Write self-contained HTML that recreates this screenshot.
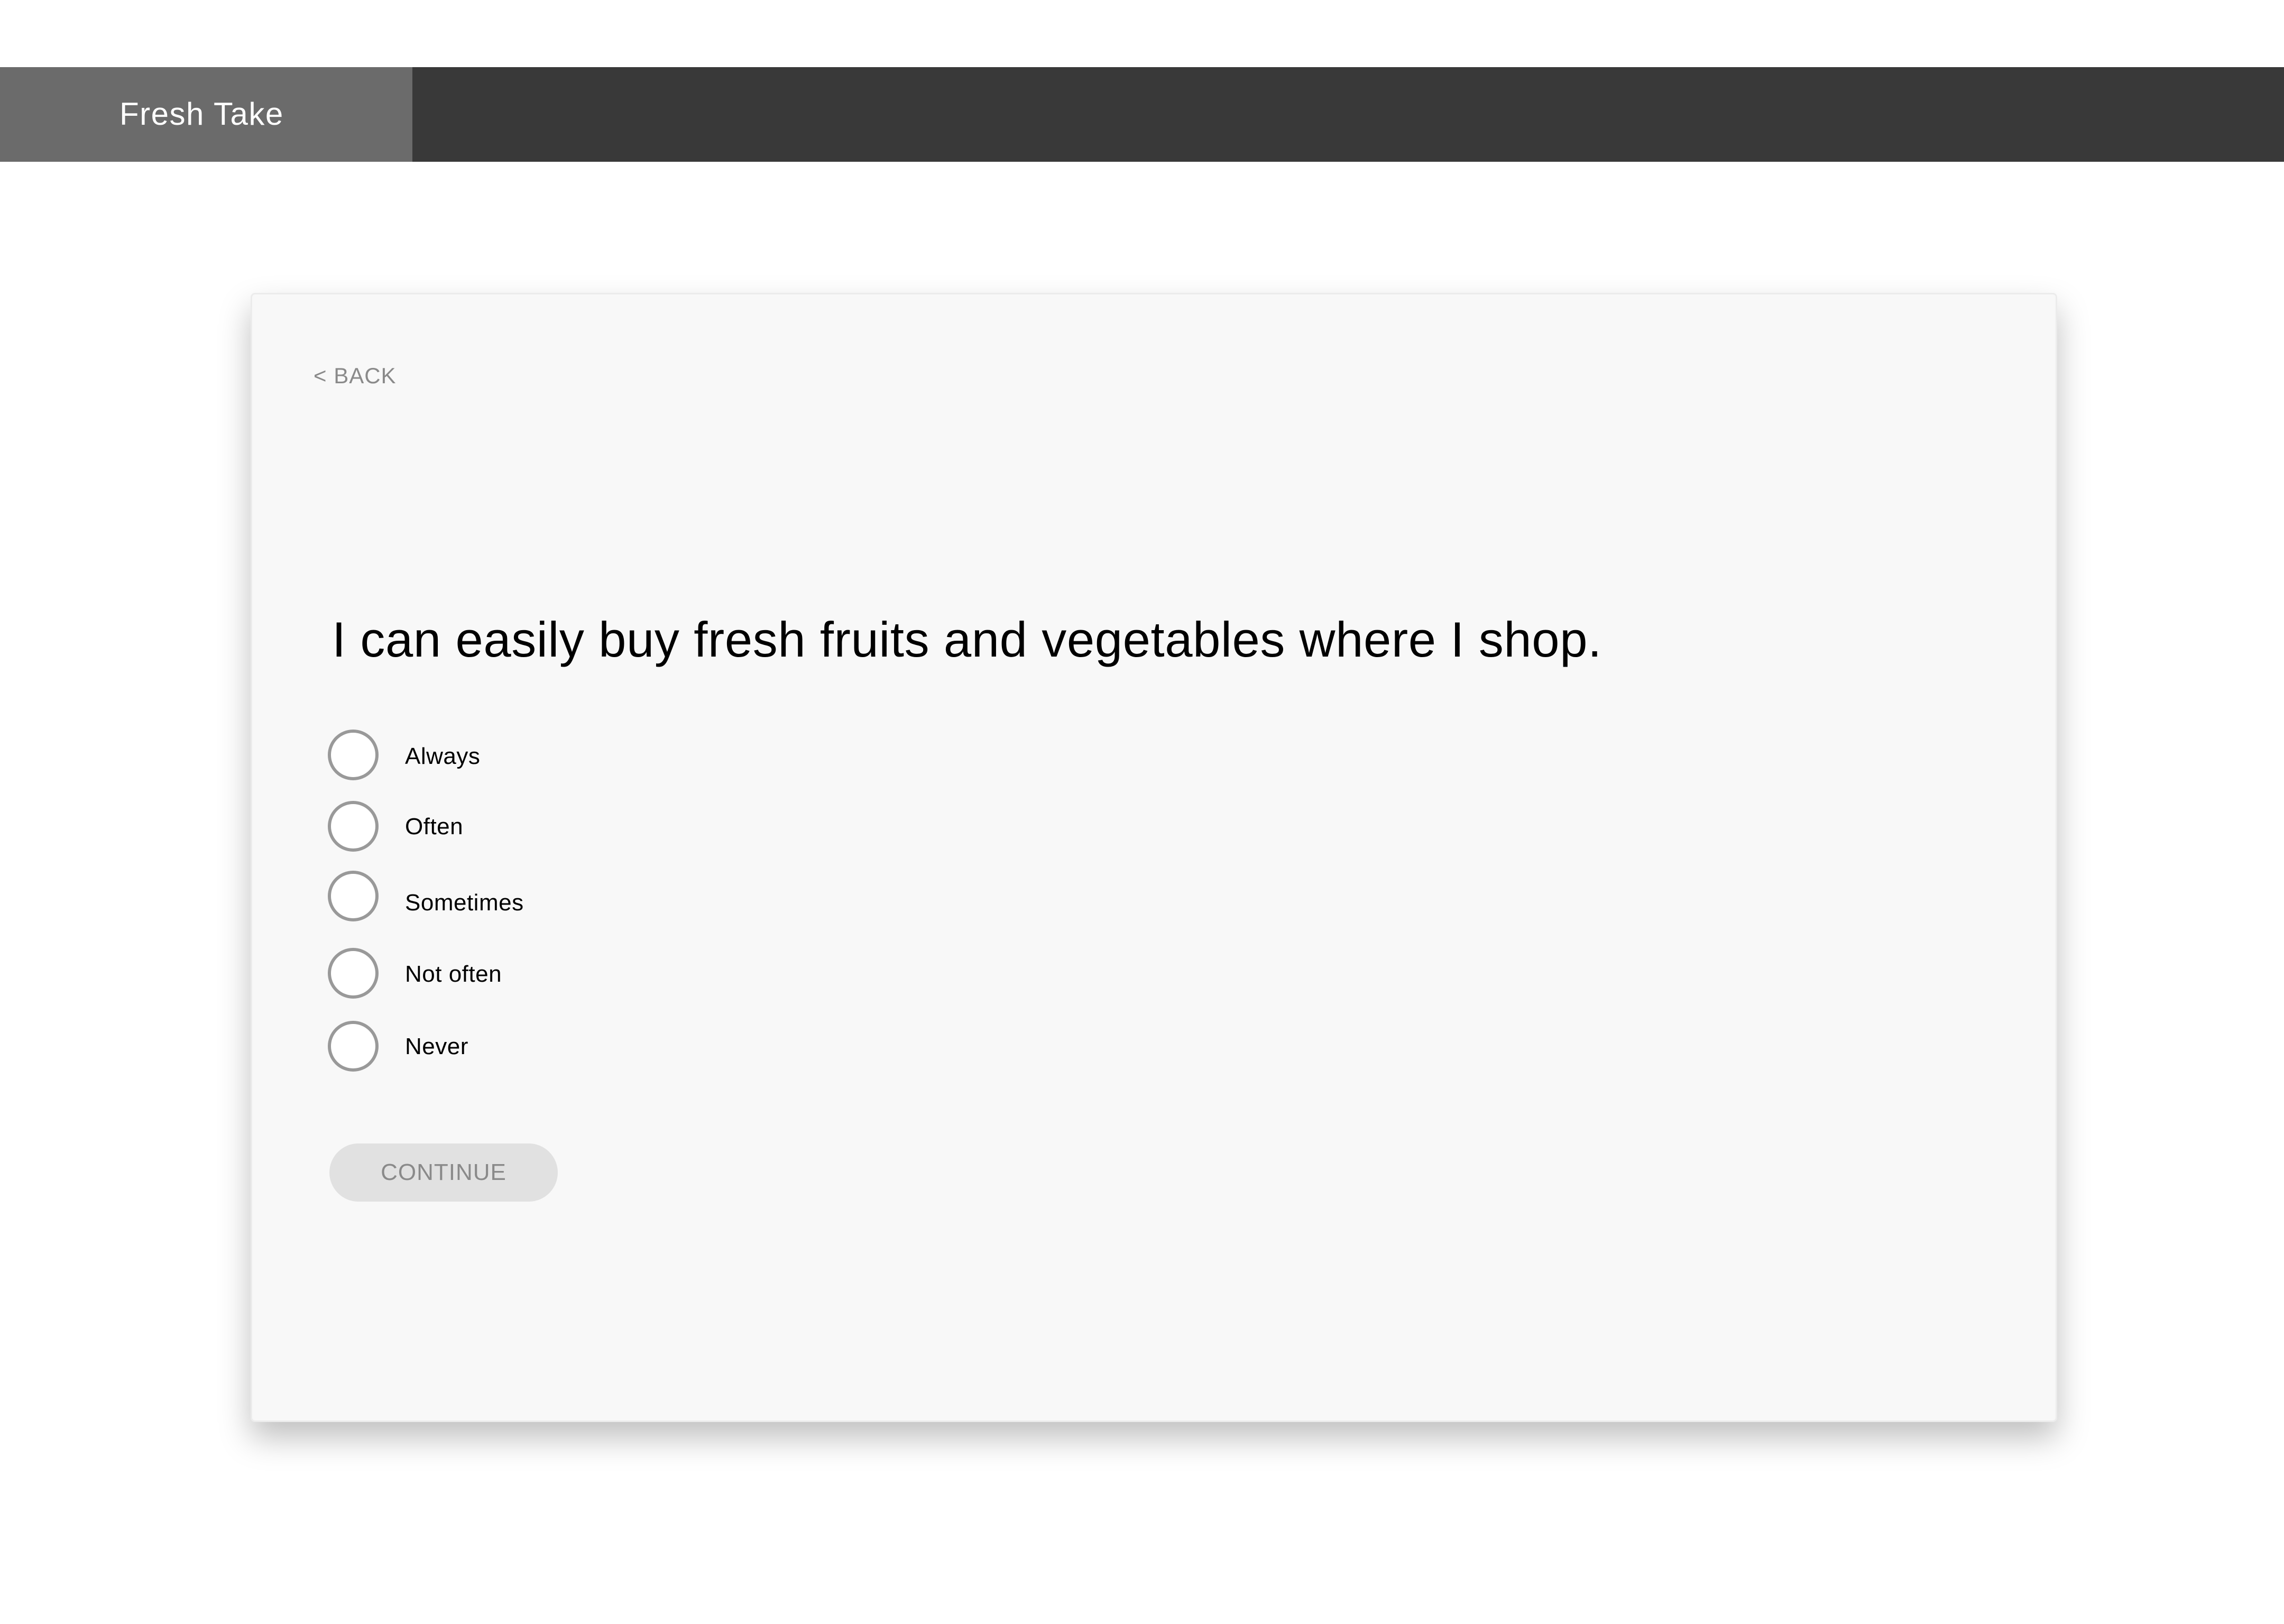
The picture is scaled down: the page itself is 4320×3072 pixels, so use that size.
<!DOCTYPE html>
<html><head><meta charset="utf-8"><style>
html,body{margin:0;padding:0;width:4320px;height:3072px;background:#fff;overflow:hidden;font-family:"Liberation Sans",sans-serif;}
.hdr{position:absolute;left:0;top:127px;width:4320px;height:179px;background:#393939;}
.logo{position:absolute;left:0;top:127px;width:780px;height:179px;background:#6b6b6b;}
.logo span{position:absolute;left:226px;top:56px;font-size:60px;color:#fff;line-height:66px;letter-spacing:1.5px;}
.card{position:absolute;left:474px;top:554px;width:3411px;height:2130px;background:#f8f8f8;border:3px solid #ececec;border-radius:8px;box-shadow:0 30px 60px rgba(0,0,0,.25);}
.back{position:absolute;left:593px;top:686px;font-size:42px;color:#8a8a8a;line-height:50px;letter-spacing:1px;}
.q{position:absolute;left:628px;top:1155px;font-size:94px;color:#000;line-height:110px;letter-spacing:0.6px;white-space:nowrap;}
.r{position:absolute;left:620px;width:84px;height:84px;border:6px solid #999;border-radius:50%;background:#fff;}
.l{position:absolute;left:766px;font-size:44px;color:#000;line-height:50px;letter-spacing:.5px;}
.btn{position:absolute;left:623px;top:2163px;width:432px;height:110px;border-radius:55px;background:#e1e1e1;color:#8a8a8a;font-size:44px;line-height:110px;text-align:center;letter-spacing:1px;}
</style></head><body>
<div class="hdr"></div>
<div class="logo"><span>Fresh Take</span></div>
<div class="card"></div>
<div class="back">&lt; BACK</div>
<div class="q">I can easily buy fresh fruits and vegetables where I shop.</div>
<div class="r" style="top:1380px"></div><div class="l" style="top:1406px">Always</div>
<div class="r" style="top:1515px"></div><div class="l" style="top:1539px">Often</div>
<div class="r" style="top:1647px"></div><div class="l" style="top:1683px">Sometimes</div>
<div class="r" style="top:1793px"></div><div class="l" style="top:1818px">Not often</div>
<div class="r" style="top:1931px"></div><div class="l" style="top:1955px">Never</div>
<div class="btn">CONTINUE</div>
</body></html>
